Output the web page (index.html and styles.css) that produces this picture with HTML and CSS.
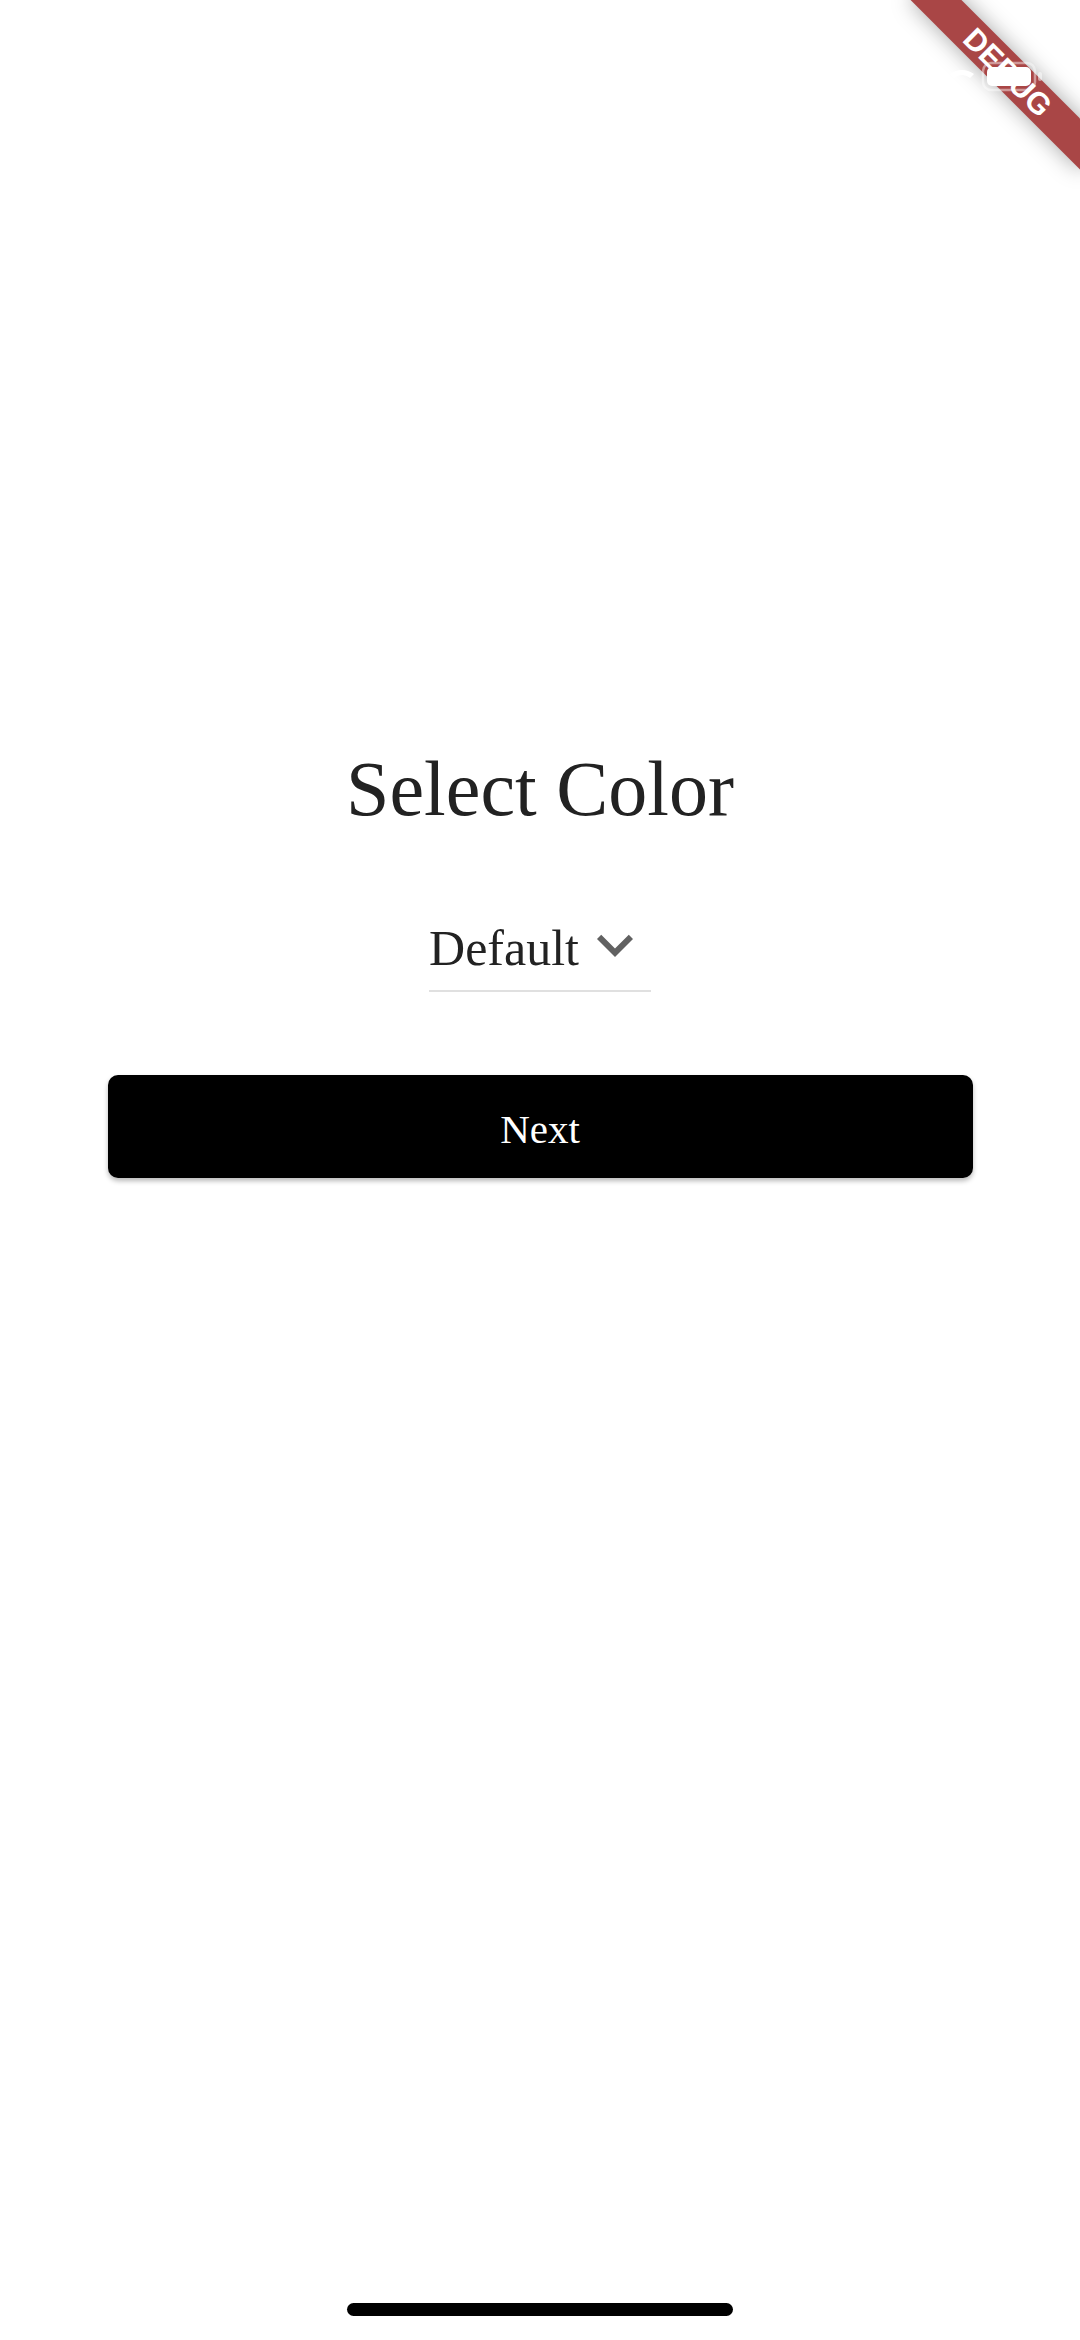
FILE: index.html
```html
<!DOCTYPE html>
<html lang="en">
<head>
<meta charset="utf-8">
<title>Select Color</title>
<link rel="stylesheet" href="styles.css">
</head>
<body>
<div class="screen">
  <main class="content">
    <h1 class="title">Select Color</h1>
    <div class="dropdown">
      <span class="dropdown-value">Default</span>
      <svg class="chevron" viewBox="0 0 24 24" aria-hidden="true"><path d="M16.59 8.59L12 13.17 7.41 8.59 6 10l6 6 6-6z"/></svg>
    </div>
    <button class="next-button" type="button">Next</button>
  </main>
  <div class="home-indicator"></div>
  <div class="debug-banner">DEBUG</div>
  <svg class="status-icons" viewBox="0 0 150 40" aria-hidden="true">
    <path class="wifi" d="M2 16 Q14 8 26 16 L22 20 Q14 14 6 20 Z"/>
    <rect class="battery-outline" x="35" y="5" width="52" height="27" rx="8"/>
    <rect class="battery-fill" x="39" y="9" width="44" height="19" rx="5"/>
    <rect class="battery-tip" x="90" y="14" width="4" height="9" rx="2"/>
  </svg>
</div>
</body>
</html>
```

FILE: styles.css
```css
html, body {
  margin: 0;
  padding: 0;
  background: #ffffff;
}

.screen {
  position: relative;
  width: 1080px;
  height: 2340px;
  overflow: hidden;
  display: flex;
  flex-direction: column;
  align-items: center;
  font-family: "Liberation Serif", "Times New Roman", serif;
}

.content {
  display: flex;
  flex-direction: column;
  align-items: center;
  padding-top: 750px;
}

.title {
  margin: 0;
  font-size: 78px;
  line-height: 78px;
  font-weight: 400;
  color: #222222;
}

.dropdown {
  margin-top: 81px;
  display: flex;
  align-items: flex-start;
  padding-bottom: 9px;
  border-bottom: 2px solid #e0e0e0;
}

.dropdown-value {
  margin-top: 14px;
  font-size: 50px;
  line-height: 50px;
  color: #222222;
}

.chevron {
  width: 72px;
  height: 72px;
  fill: #616161;
  display: block;
}

.next-button {
  margin-top: 83px;
  width: 865px;
  height: 103px;
  padding: 34px 0 28px;
  border: none;
  border-radius: 10px;
  background: #000000;
  color: #ffffff;
  font-family: "Liberation Serif", "Times New Roman", serif;
  font-size: 41px;
  line-height: 41px;
  box-shadow: 0 3px 5px rgba(0, 0, 0, 0.28);
}

.home-indicator {
  margin-top: auto;
  margin-bottom: 24px;
  width: 386px;
  height: 13px;
  border-radius: 7px;
  background: #000000;
}

.debug-banner {
  position: absolute;
  left: 888px;
  top: 54px;
  width: 240px;
  height: 36px;
  transform: rotate(45deg);
  background: #a94646;
  box-shadow: 0 0 22px rgba(0, 0, 0, 0.35);
  color: #ffffff;
  font-family: "Liberation Sans", Arial, sans-serif;
  font-weight: 900;
  font-size: 30.6px;
  line-height: 36px;
  text-align: center;
}

.status-icons {
  position: absolute;
  left: 948px;
  top: 58px;
  width: 150px;
  height: 40px;
}

.wifi {
  fill: #ffffff;
}

.battery-outline {
  fill: none;
  stroke: rgba(255, 255, 255, 0.45);
  stroke-width: 2.5;
}

.battery-fill {
  fill: #ffffff;
}

.battery-tip {
  fill: rgba(255, 255, 255, 0.5);
}
```
